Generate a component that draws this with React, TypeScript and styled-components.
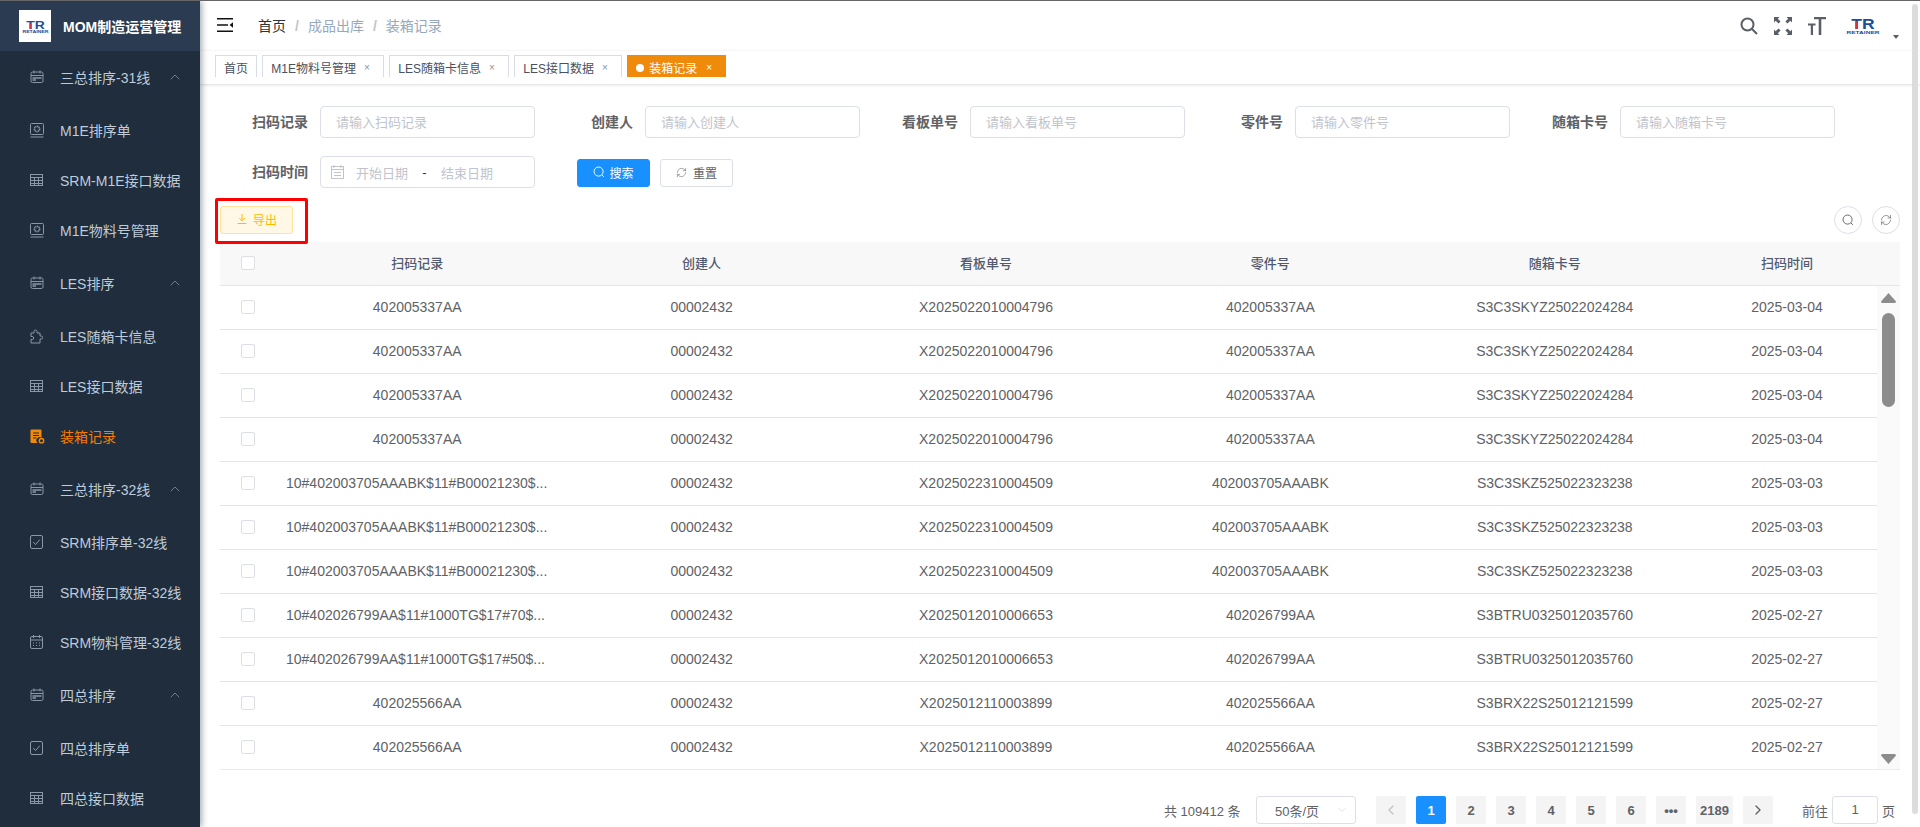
import React from 'react';
import styled, { createGlobalStyle } from 'styled-components';
import { ChevronDown, ChevronLeft, ChevronRight, ChevronUp, RefreshCw } from 'lucide-react';

const GlobalStyle = createGlobalStyle`
  html, body {
    margin: 0;
    padding: 0;
    height: 100%;
    overflow: hidden;
    background: #fff;
  }
  body {
    font-family: "Liberation Sans", "Noto Sans CJK SC", sans-serif;
    font-size: 14px;
    color: #606266;
  }
  * {
    box-sizing: border-box;
  }
`;

type MenuIconName = 'calendarWide' | 'chip' | 'table' | 'puzzle' | 'record' | 'check' | 'calendar';

interface MenuEntry {
  label: string;
  icon: MenuIconName;
  group?: boolean;
  active?: boolean;
}

const menu: MenuEntry[] = [
  { label: '三总排序-31线', icon: 'calendarWide', group: true },
  { label: 'M1E排序单', icon: 'chip' },
  { label: 'SRM-M1E接口数据', icon: 'table' },
  { label: 'M1E物料号管理', icon: 'chip' },
  { label: 'LES排序', icon: 'calendarWide', group: true },
  { label: 'LES随箱卡信息', icon: 'puzzle' },
  { label: 'LES接口数据', icon: 'table' },
  { label: '装箱记录', icon: 'record', active: true },
  { label: '三总排序-32线', icon: 'calendarWide', group: true },
  { label: 'SRM排序单-32线', icon: 'check' },
  { label: 'SRM接口数据-32线', icon: 'table' },
  { label: 'SRM物料管理-32线', icon: 'calendar' },
  { label: '四总排序', icon: 'calendarWide', group: true },
  { label: '四总排序单', icon: 'check' },
  { label: '四总接口数据', icon: 'table' },
];

const tags = [
  { label: '首页', closable: false },
  { label: 'M1E物料号管理', closable: true },
  { label: 'LES随箱卡信息', closable: true },
  { label: 'LES接口数据', closable: true },
  { label: '装箱记录', closable: true, active: true },
];

const filters = [
  { label: '扫码记录', placeholder: '请输入扫码记录' },
  { label: '创建人', placeholder: '请输入创建人' },
  { label: '看板单号', placeholder: '请输入看板单号' },
  { label: '零件号', placeholder: '请输入零件号' },
  { label: '随箱卡号', placeholder: '请输入随箱卡号' },
];

const columns = ['扫码记录', '创建人', '看板单号', '零件号', '随箱卡号', '扫码时间'];

const record = (count: number, row: string[]) => Array.from({ length: count }, () => row);

const rows: string[][] = [
  ...record(4, ['402005337AA', '00002432', 'X2025022010004796', '402005337AA', 'S3C3SKYZ25022024284', '2025-03-04']),
  ...record(3, [
    '10#402003705AAABK$11#B00021230$...',
    '00002432',
    'X2025022310004509',
    '402003705AAABK',
    'S3C3SKZ525022323238',
    '2025-03-03',
  ]),
  ['10#402026799AA$11#1000TG$17#70$...', '00002432', 'X2025012010006653', '402026799AA', 'S3BTRU0325012035760', '2025-02-27'],
  ['10#402026799AA$11#1000TG$17#50$...', '00002432', 'X2025012010006653', '402026799AA', 'S3BTRU0325012035760', '2025-02-27'],
  ...record(2, ['402025566AA', '00002432', 'X2025012110003899', '402025566AA', 'S3BRX22S25012121599', '2025-02-27']),
];

const pages = ['1', '2', '3', '4', '5', '6', '•••', '2189'];

const MenuIcon = ({ name }: { name: MenuIconName }) => {
  const common = { fill: 'none', stroke: 'currentColor', strokeWidth: 1 };
  switch (name) {
    case 'calendarWide':
      return (
        <svg width="14" height="14" viewBox="0 0 14 14" {...common}>
          <rect x="1" y="2" width="12" height="10.5" rx="1.5" />
          <path d="M1 5.500h12M4 .5v3M10 .5v3" />
          <path d="M2.500 8h9M2.500 10h3.500" strokeWidth="1.300" />
        </svg>
      );
    case 'chip':
      return (
        <svg width="14" height="15" viewBox="0 0 14 15" {...common}>
          <rect x=".5" y=".5" width="13" height="11" rx="1" />
          <circle cx="7" cy="6" r="2.600" strokeWidth="1.600" strokeDasharray="1.200 .5" />
          <path d="M.5 14h13" />
        </svg>
      );
    case 'table':
      return (
        <svg width="13" height="12" viewBox="0 0 13 12" {...common}>
          <rect x=".5" y=".5" width="12" height="11" />
          <path d="M.5 3.500h12M.5 6.500h12M.5 9.500h12M4.500 3.500v8M8.500 3.500v8" />
        </svg>
      );
    case 'puzzle':
      return (
        <svg width="13" height="15" viewBox="0 0 13 15" {...common}>
          <path d="M1 4h3V2.500a1.500 1.500 0 0 1 3 0V4h3v3h1.200a1.500 1.500 0 0 1 0 3H10v4H1v-3.500h1.200a1.500 1.500 0 0 0 0-3H1z" />
        </svg>
      );
    case 'record':
      return (
        <svg width="15" height="15" viewBox="0 0 15 15">
          <path fill="currentColor" d="M.5 1.500A1 1 0 0 1 1.500.5h9a1 1 0 0 1 1 1v7.200a3.200 3.200 0 0 0-3.700 5.300H1.500a1 1 0 0 1-1-1z" />
          <path stroke="#1f2d3d" strokeWidth="1" d="M3 4h6M3 6.500h6M3 9h3.500" />
          <circle cx="11.500" cy="11.700" r="2.200" fill="none" stroke="currentColor" strokeWidth="1.400" />
        </svg>
      );
    case 'check':
      return (
        <svg width="13" height="14" viewBox="0 0 13 14" {...common}>
          <rect x=".5" y=".5" width="12" height="13" rx="1.500" />
          <path d="M3.200 7l2.400 2.600 4.200-5" />
        </svg>
      );
    default:
      return (
        <svg width="13" height="14" viewBox="0 0 13 14" {...common}>
          <rect x=".5" y="1.500" width="12" height="12" rx="1.500" />
          <path d="M.5 5h12M3.500 0v3M9.500 0v3M3 8h1M6 8h1M9 8h1M3 10.500h1M6 10.500h1M9 10.500h1" />
        </svg>
      );
  }
};

const TrLogo = ({ width, height }: { width: number; height: number }) => (
  <svg width={width} height={height} viewBox="0 0 34 18">
    <text transform="translate(5.300 12) scale(1.250 1)" fontFamily="Liberation Sans" fontWeight="700" fontSize="14" fill="#1b4f9c">
      TR
    </text>
    <rect x="9.400" y="4.500" width="2.500" height="7.500" fill="#d8343c" />
    <text x=".5" y="17" fontFamily="Liberation Sans" fontWeight="700" fontSize="3.800" fill="#1b4f9c" textLength="33" lengthAdjust="spacingAndGlyphs">
      RETAINER
    </text>
  </svg>
);

const SearchGlyph = ({ size = 14 }: { size?: number }) => (
  <svg width={size} height={size} viewBox="0 0 14 14" fill="none" stroke="currentColor" strokeWidth="1.100">
    <circle cx="6.500" cy="6.500" r="5.300" />
    <path d="M10.300 10.300l2.400 2.400" />
  </svg>
);

const App = () => (
  <>
    <GlobalStyle />
    <Page>
      <Sidebar>
        <Brand>
          <BrandTile>
            <TrLogo width={27} height={15} />
          </BrandTile>
          <BrandTitle>MOM制造运营管理</BrandTitle>
        </Brand>
        <MenuList>
          {menu.map((entry) => (
            <MenuRow key={entry.label} $group={!!entry.group} $active={!!entry.active}>
              <MenuIconSlot $active={!!entry.active}>
                <MenuIcon name={entry.icon} />
              </MenuIconSlot>
              <MenuLabel>{entry.label}</MenuLabel>
              {entry.group && (
                <MenuArrow>
                  <ChevronUp size={16} strokeWidth={1} />
                </MenuArrow>
              )}
            </MenuRow>
          ))}
        </MenuList>
      </Sidebar>

      <Main>
        <Navbar>
          <Hamburger width="16" height="14" viewBox="0 0 16 14">
            <path d="M0 .8h16M0 7h11M0 13.200h16" stroke="#111" strokeWidth="1.500" />
            <path d="M16 4.200v5.600L12.600 7z" fill="#111" />
          </Hamburger>
          <Breadcrumb>
            <CrumbRoot>首页</CrumbRoot>
            <CrumbSeparator>/</CrumbSeparator>
            <span>成品出库</span>
            <CrumbSeparator>/</CrumbSeparator>
            <span>装箱记录</span>
          </Breadcrumb>
          <NavTools>
            <svg width="18" height="18" viewBox="0 0 18 18" fill="none" stroke="#5a5e66" strokeWidth="2">
              <circle cx="7.500" cy="7.500" r="6" />
              <path d="M12 12l5 5" />
            </svg>
            <svg width="18" height="18" viewBox="0 0 18 18" fill="#5a5e66">
              <path d="M0 0h5.500L3.800 1.700 6.600 4.500 4.500 6.600 1.700 3.800 0 5.500zM18 0v5.500l-1.700-1.700-2.800 2.800-2.100-2.100 2.800-2.800L12.500 0zM0 18v-5.500l1.700 1.700 2.800-2.800 2.100 2.100-2.800 2.800L5.500 18zM18 18h-5.500l1.700-1.700-2.800-2.800 2.100-2.100 2.800 2.800 1.700-1.700z" />
            </svg>
            <svg width="18" height="18" viewBox="0 0 18 18" fill="#5a5e66">
              <path d="M6 0h12v2.200h-4.700V18h-2.600V2.200H6zM0 6.500h7.500v2H5V18H2.800V8.500H0z" />
            </svg>
            <UserBlock>
              <TrLogo width={34} height={18} />
              <UserCaret />
            </UserBlock>
          </NavTools>
        </Navbar>

        <TagsBar>
          {tags.map((tag) => (
            <Tag key={tag.label} $active={!!tag.active}>
              {tag.active && <TagDot />}
              {tag.label}
              {tag.closable && <TagClose $active={!!tag.active}>×</TagClose>}
            </Tag>
          ))}
        </TagsBar>

        <Content>
          <FilterForm>
            {filters.map((filter) => (
              <FormItem key={filter.label}>
                <FormLabel>{filter.label}</FormLabel>
                <TextInput placeholder={filter.placeholder} readOnly />
              </FormItem>
            ))}
            <FormItem>
              <FormLabel>扫码时间</FormLabel>
              <DateRange>
                <svg width="13" height="14" viewBox="0 0 13 14" fill="none" stroke="#c0c4cc" strokeWidth="1">
                  <rect x=".5" y="1.500" width="12" height="12" />
                  <path d="M.5 4.500h12M3 0v3M10 0v3M3 7.500h7M3 10.500h7" />
                </svg>
                <DateText>开始日期</DateText>
                <DateDash>-</DateDash>
                <DateText>结束日期</DateText>
              </DateRange>
            </FormItem>
            <FormButtons>
              <PrimaryButton>
                <SearchGlyph size={12} />
                搜索
              </PrimaryButton>
              <PlainButton>
                <RefreshCw size={11} strokeWidth={1.2} />
                重置
              </PlainButton>
            </FormButtons>
          </FilterForm>

          <TableTools>
            <ExportButton>
              <svg width="12" height="12" viewBox="0 0 12 12" fill="none" stroke="currentColor" strokeWidth="1">
                <path d="M6 1v6.500M3.200 5L6 7.800 8.800 5M1.500 10.500h9" />
              </svg>
              导出
            </ExportButton>
            <ExportHighlight />
            <RoundButtons>
              <RoundButton>
                <SearchGlyph size={12} />
              </RoundButton>
              <RoundButton>
                <RefreshCw size={12} strokeWidth={1.3} />
              </RoundButton>
            </RoundButtons>
          </TableTools>

          <TableWrap>
            <HeadRow>
              <CheckCell>
                <CheckBox />
              </CheckCell>
              {columns.map((column) => (
                <HeadCell key={column}>{column}</HeadCell>
              ))}
            </HeadRow>
            <TableBody>
              <RowList>
                {rows.map((row, rowIndex) => (
                  <BodyRow key={rowIndex}>
                    <CheckCell>
                      <CheckBox />
                    </CheckCell>
                    {row.map((value, cellIndex) => (
                      <BodyCell key={cellIndex} $truncated={value.endsWith('...')}>
                        {value}
                      </BodyCell>
                    ))}
                  </BodyRow>
                ))}
              </RowList>
              <TableScrollbar>
                <ScrollArrow viewBox="0 0 15 10">
                  <path d="M7.500 0L15 8.500q0 1.500-1.500 1.500h-12Q0 10 0 8.500z" />
                </ScrollArrow>
                <ScrollThumb />
                <ScrollSpacer />
                <ScrollArrow viewBox="0 0 15 10">
                  <path d="M7.500 10L15 1.500Q15 0 13.500 0h-12Q0 0 0 1.500z" />
                </ScrollArrow>
              </TableScrollbar>
            </TableBody>
          </TableWrap>

          <Pagination>
            <PagerTotal>共 109412 条</PagerTotal>
            <PageSize>
              50条/页
              <ChevronDown size={12} strokeWidth={1} color="#c0c4cc" />
            </PageSize>
            <PagerButton $disabled>
              <ChevronLeft size={16} strokeWidth={2} />
            </PagerButton>
            {pages.map((page) => (
              <PagerButton key={page} $active={page === '1'} $wide={page === '2189'}>
                {page}
              </PagerButton>
            ))}
            <PagerButton>
              <ChevronRight size={16} strokeWidth={2} />
            </PagerButton>
            <Jumper>
              前往
              <JumperInput>1</JumperInput>
              页
            </Jumper>
          </Pagination>
        </Content>
      </Main>
      <PageScrollbar />
    </Page>
  </>
);

export default App;

const Page = styled.div`
  position: relative;
  display: flex;
  width: 1920px;
  height: 827px;
  overflow: hidden;
  border-top: 1px solid #666;
`;

const Sidebar = styled.aside`
  flex: 0 0 200px;
  background: #1f2d3d;
  box-shadow: 2px 0 6px rgba(0, 21, 41, 0.35);
  z-index: 2;
  overflow: hidden;
`;

const Brand = styled.div`
  position: relative;
  z-index: 1;
  display: flex;
  align-items: center;
  height: 50px;
  padding-left: 19px;
  background: #2b3c52;
`;

const BrandTile = styled.div`
  display: flex;
  align-items: center;
  justify-content: center;
  width: 32px;
  height: 32px;
  background: #fff;
`;

const BrandTitle = styled.h1`
  margin: 0 0 0 12px;
  font-size: 14px;
  font-weight: 700;
  color: #fff;
  white-space: nowrap;
`;

const MenuList = styled.nav`
  margin-top: -1px;
`;

const MenuRow = styled.div<{ $group: boolean; $active: boolean }>`
  display: flex;
  align-items: center;
  height: ${({ $group }) => ($group ? '56px' : '50px')};
  padding: 0 0 2px 30px;
  font-size: 14px;
  color: ${({ $active }) => ($active ? '#f57c00' : '#bfcbd9')};
`;

const MenuIconSlot = styled.span<{ $active: boolean }>`
  display: flex;
  align-items: center;
  justify-content: flex-start;
  width: 30px;
  color: ${({ $active }) => ($active ? '#f08a0b' : '#8b97a6')};
`;

const MenuLabel = styled.span`
  white-space: nowrap;
`;

const MenuArrow = styled.span`
  display: flex;
  margin-left: auto;
  margin-right: 17px;
  color: #9aa5b3;
`;

const Main = styled.main`
  flex: 1;
  display: flex;
  flex-direction: column;
  min-width: 0;
`;

const Navbar = styled.header`
  display: flex;
  align-items: center;
  height: 50px;
  padding: 0 0 2px 17px;
  background: #fff;
  box-shadow: 0 1px 4px rgba(0, 21, 41, 0.08);
`;

const Hamburger = styled.svg`
  flex: none;
`;

const Breadcrumb = styled.div`
  margin-left: 25px;
  font-size: 14px;
  color: #97a8be;
`;

const CrumbRoot = styled.span`
  color: #303133;
`;

const CrumbSeparator = styled.span`
  margin: 0 9px;
  color: #c0c4cc;
  font-weight: 700;
`;

const NavTools = styled.div`
  display: flex;
  align-items: center;
  gap: 16px;
  margin: 2px 0 0 auto;
  padding-right: 40px;
`;

const UserBlock = styled.div`
  position: relative;
  display: flex;
  margin-left: 4px;
`;

const UserCaret = styled.span`
  position: absolute;
  left: 47px;
  top: 18px;
  border-style: solid;
  border-width: 4px 3px 0;
  border-color: #5a5e66 transparent transparent;
`;

const TagsBar = styled.div`
  position: relative;
  display: flex;
  gap: 5.3px;
  height: 33px;
  padding: 4px 0 0 15px;
  background: #fff;
  box-shadow: 0 1px 3px 0 rgba(0, 0, 0, 0.12), 0 0 3px 0 rgba(0, 0, 0, 0.04);
`;

const Tag = styled.div<{ $active: boolean }>`
  display: flex;
  align-items: center;
  height: 22px;
  padding: 2px 8px 0;
  font-size: 12px;
  white-space: nowrap;
  color: ${({ $active }) => ($active ? '#fff' : '#495060')};
  background: ${({ $active }) => ($active ? '#f08a0b' : '#fff')};
  border: 1px solid ${({ $active }) => ($active ? '#f08a0b' : '#d8dce5')};
  border-bottom: none;
`;

const TagDot = styled.span`
  width: 8px;
  height: 8px;
  margin-right: 5px;
  border-radius: 50%;
  background: #fff;
`;

const TagClose = styled.span<{ $active: boolean }>`
  width: 16px;
  margin-left: ${({ $active }) => ($active ? '4px' : '3px')};
  text-align: center;
  font-size: 10px;
  color: ${({ $active }) => ($active ? '#fff' : '#8d939c')};
`;

const Content = styled.div`
  flex: 1;
  min-height: 0;
  padding: 22px 20px 0;
`;

const FilterForm = styled.form`
  display: flex;
  flex-wrap: wrap;
`;

const FormItem = styled.div`
  display: flex;
  margin: 0 10px 18px 0;
`;

const FormLabel = styled.label`
  width: 100px;
  padding-right: 12px;
  font-size: 14px;
  font-weight: 700;
  line-height: 32px;
  text-align: right;
  color: #606266;
`;

const TextInput = styled.input`
  width: 215px;
  height: 32px;
  padding: 0 15px;
  font: inherit;
  font-size: 13px;
  color: #606266;
  background: #fff;
  border: 1px solid #dcdfe6;
  border-radius: 4px;
  outline: none;

  &::placeholder {
    color: #c0c4cc;
  }
`;

const DateRange = styled.div`
  display: flex;
  align-items: center;
  width: 215px;
  height: 32px;
  padding-left: 10px;
  border: 1px solid #dcdfe6;
  border-radius: 4px;
`;

const DateText = styled.span`
  width: 52px;
  font-size: 13px;
  white-space: nowrap;
  color: #c0c4cc;

  &:first-of-type {
    margin-left: 12px;
  }
`;

const DateDash = styled.span`
  width: 33px;
  font-size: 13px;
  text-align: center;
  color: #303133;
`;

const FormButtons = styled.div`
  display: flex;
  gap: 10px;
  height: 32px;
  padding: 3px 0 1px 32px;
`;

const BaseButton = styled.div`
  display: flex;
  align-items: center;
  justify-content: center;
  gap: 4px;
  width: 73px;
  height: 28px;
  padding-bottom: 2px;
  font-size: 12px;
  border-radius: 3px;
`;

const PrimaryButton = styled(BaseButton)`
  color: #fff;
  background: #1890ff;
  border: 1px solid #1890ff;
`;

const PlainButton = styled(BaseButton)`
  gap: 6px;
  color: #606266;
  background: #fff;
  border: 1px solid #dcdfe6;
`;

const TableTools = styled.div`
  position: relative;
  display: flex;
  align-items: center;
  justify-content: space-between;
  margin-bottom: 8px;
`;

const ExportButton = styled(BaseButton)`
  gap: 5px;
  color: #ffba00;
  background: #fff8e6;
  border: 1px solid #ffe399;
`;

const ExportHighlight = styled.span`
  position: absolute;
  left: -5px;
  top: -8px;
  width: 93px;
  height: 46px;
  border: 3px solid #f00;
  border-radius: 2px;
  pointer-events: none;
`;

const RoundButtons = styled.div`
  display: flex;
  gap: 10px;
`;

const RoundButton = styled.div`
  display: flex;
  align-items: center;
  justify-content: center;
  width: 28px;
  height: 28px;
  color: #606266;
  background: #fff;
  border: 1px solid #dcdfe6;
  border-radius: 50%;
`;

const TableWrap = styled.section`
  border-bottom: 1px solid #e6ebf5;
`;

const tableColumns = '55px repeat(5, 284.4px) 180px';

const HeadRow = styled.div`
  display: grid;
  grid-template-columns: ${tableColumns} 23px;
  height: 44px;
  background: #f8f8f9;
  border-bottom: 1px solid #dfe6ec;
`;

const CheckCell = styled.div`
  display: flex;
  align-items: center;
  justify-content: center;
  padding-bottom: 1px;
`;

const CheckBox = styled.span`
  width: 14px;
  height: 14px;
  background: #fff;
  border: 1px solid #dcdfe6;
  border-radius: 2px;
`;

const HeadCell = styled.div`
  display: flex;
  align-items: center;
  justify-content: center;
  padding-bottom: 2px;
  font-size: 13px;
  font-weight: 500;
  color: #515a6e;
`;

const TableBody = styled.div`
  display: flex;
  height: 483px;
  overflow: hidden;
`;

const RowList = styled.div`
  flex: 1;
  min-width: 0;
`;

const BodyRow = styled.div`
  display: grid;
  grid-template-columns: ${tableColumns};
  height: 44px;
  border-bottom: 1px solid #dfe6ec;
`;

const BodyCell = styled.div<{ $truncated: boolean }>`
  padding: 0 10px 0 ${({ $truncated }) => ($truncated ? '11px' : '10px')};
  font-size: 14px;
  line-height: 43px;
  text-align: ${({ $truncated }) => ($truncated ? 'left' : 'center')};
  color: #606266;
  white-space: nowrap;
`;

const TableScrollbar = styled.div`
  flex: 0 0 23px;
  display: flex;
  flex-direction: column;
  align-items: center;
  padding: 7px 4px 5px 4px;
  background: #fafafa;
`;

const ScrollArrow = styled.svg`
  flex: none;
  width: 15px;
  height: 10px;
  fill: #8c8c8c;
`;

const ScrollThumb = styled.div`
  flex: none;
  width: 13px;
  height: 94px;
  margin-top: 10px;
  background: #8c8c8c;
  border-radius: 7px;
`;

const ScrollSpacer = styled.div`
  flex: 1;
`;

const Pagination = styled.div`
  display: flex;
  align-items: center;
  height: 28px;
  margin-top: 26px;
  padding-left: 944px;
  font-size: 13px;
  color: #606266;
`;

const PagerTotal = styled.span`
  width: 92px;
  white-space: nowrap;
`;

const PageSize = styled.div`
  display: flex;
  align-items: center;
  justify-content: space-between;
  width: 100px;
  height: 28px;
  margin-right: 20px;
  padding: 0 7px 0 18px;
  border: 1px solid #dcdfe6;
  border-radius: 3px;
`;

const PagerButton = styled.div<{ $active?: boolean; $disabled?: boolean; $wide?: boolean }>`
  display: flex;
  align-items: center;
  justify-content: center;
  width: ${({ $wide }) => ($wide ? '37px' : '30px')};
  height: 28px;
  margin-right: 10px;
  font-weight: 700;
  border-radius: 2px;
  color: ${({ $active, $disabled }) => ($active ? '#fff' : $disabled ? '#c0c4cc' : '#606266')};
  background: ${({ $active }) => ($active ? '#1890ff' : '#f4f4f5')};
`;

const Jumper = styled.div`
  display: flex;
  align-items: center;
  margin-left: 19px;
  white-space: nowrap;
`;

const JumperInput = styled.div`
  width: 46px;
  height: 28px;
  margin: 0 4px;
  line-height: 26px;
  text-align: center;
  border: 1px solid #dcdfe6;
  border-radius: 3px;
`;

const PageScrollbar = styled.div`
  position: absolute;
  top: 3px;
  left: 1912px;
  width: 6px;
  height: 810px;
  background: #dcdcdc;
  border-radius: 3px;
`;
